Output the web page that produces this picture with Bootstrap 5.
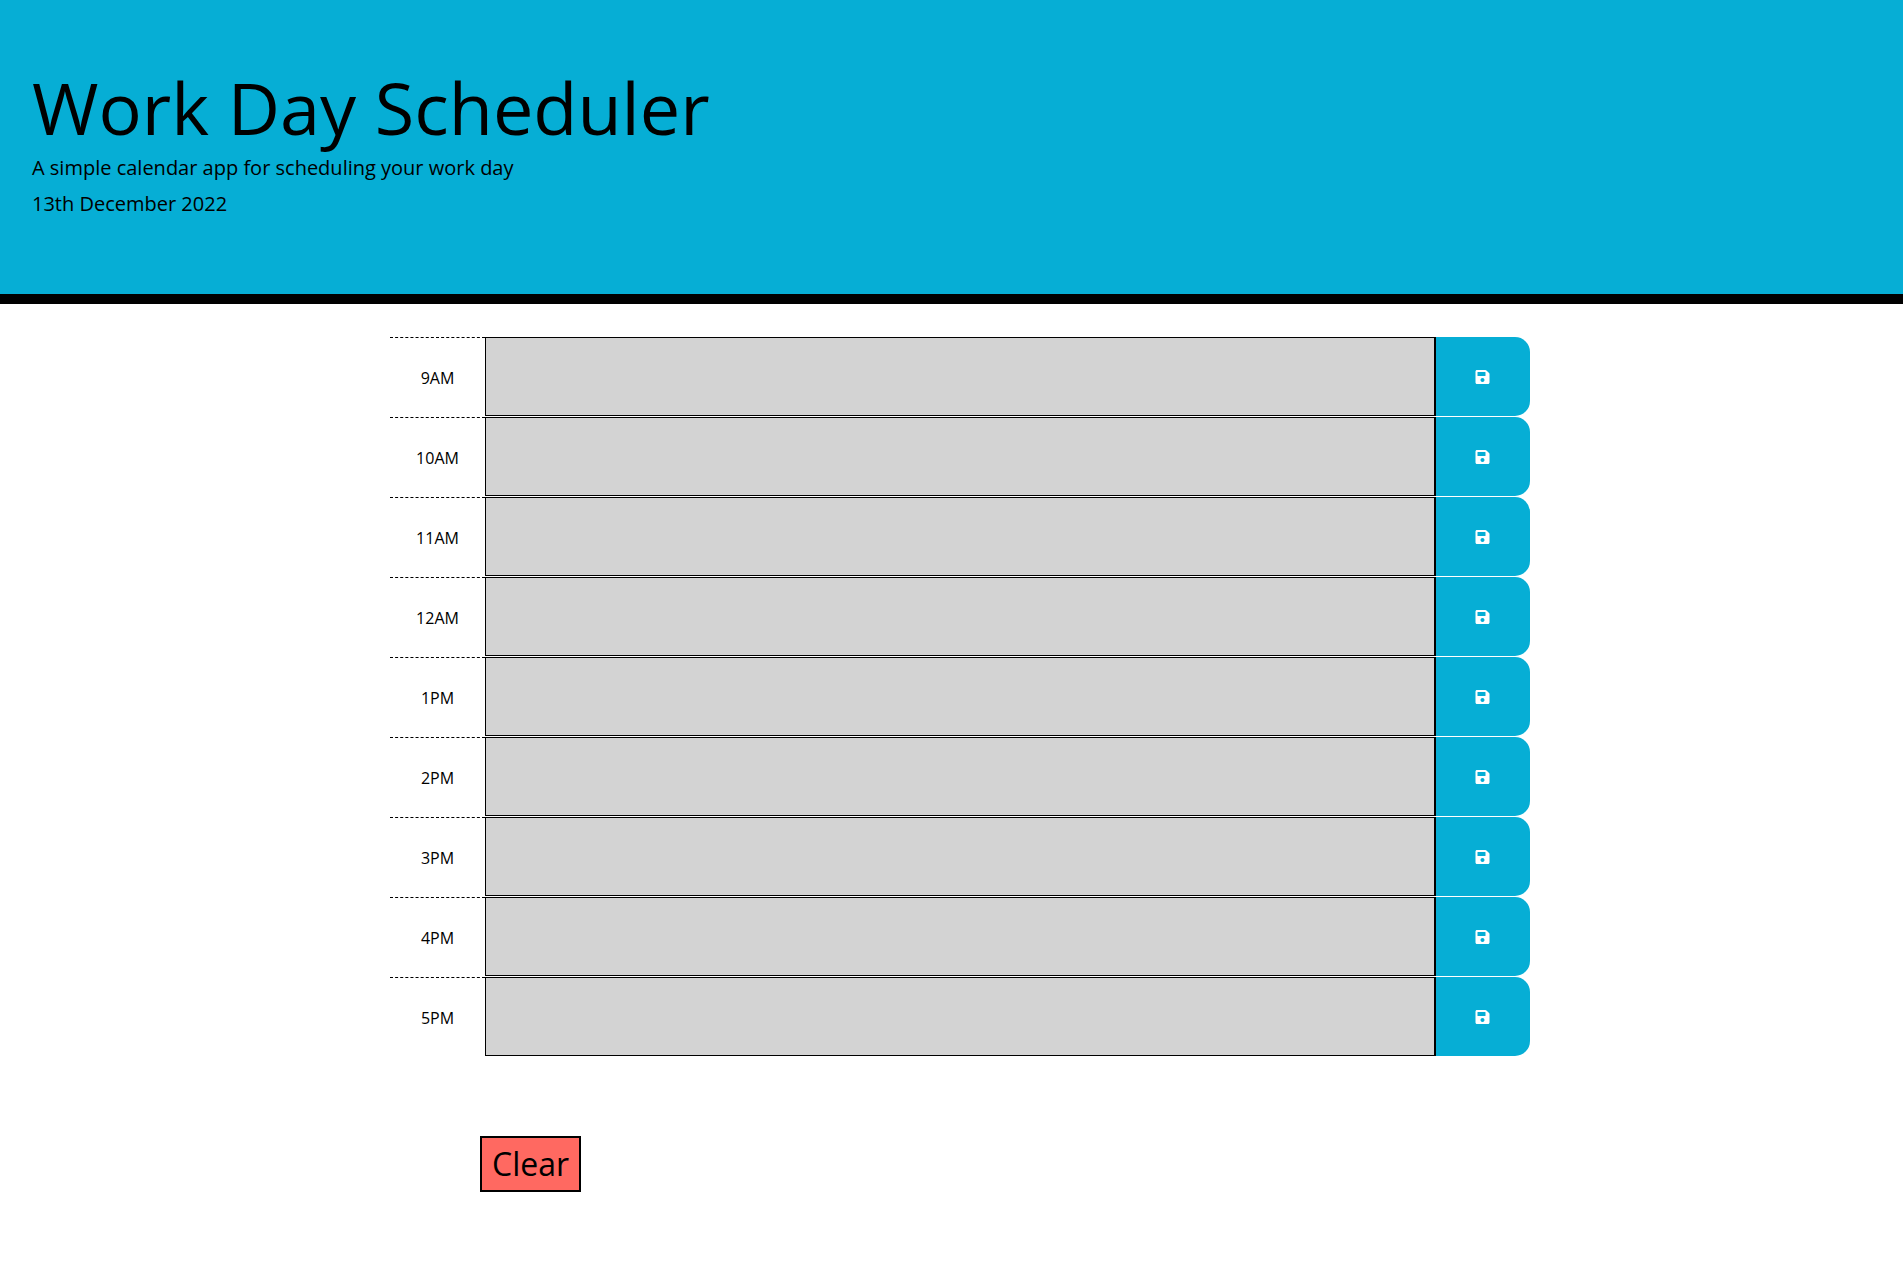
<!DOCTYPE html>
<html>
<head>
  <title>Work Day Scheduler</title>
  <meta charset="UTF-8" />
  <meta name="viewport" content="width=device-width, initial-scale=1" />
  <link href="https://cdn.jsdelivr.net/npm/bootstrap@5.3.0/dist/css/bootstrap.min.css" rel="stylesheet">
  <style>
    body { font-family: "Open Sans", sans-serif; color: #000; background: #fff; }
    .page-head { height: 304px; padding: 63px 32px 0; background: #06aed5; border-bottom: 10px solid #000; }
    .page-head h1 { font-size: 72px; line-height: 88px; font-weight: 400; margin: 0 0 2px; }
    .page-head p { font-size: 20px; line-height: 30px; margin: 0 0 6px; }
    .planner { width: 1140px; margin: 33px 0 0 390px; }
    .hour-row { height: 80px; }
    .hour-label { width: 95px; border-top: 1px dashed #000; font-size: 16px; padding-top: 28px; text-align: center; }
    .hour-text { flex: 1; height: 79px; background: #d3d3d3; border: 1px solid #000; border-radius: 0; padding: 8px; resize: none; }
    .save-btn { width: 95px; height: 79px; padding: 0 1px 0 0; background: #06aed5; border: 0; border-left: 1px solid #000; border-radius: 0 15px 15px 0; color: #fff; }
    .save-btn svg { display: block; margin: 0 auto; }
    .clear-btn { margin: 79px 0 0 480px; width: 101px; height: 56px; padding: 0; font-size: 32px; line-height: 1; background: #ff6961; border: 2px solid #000; border-radius: 0; color: #000; }
  </style>
</head>
<body>
  <header class="page-head">
    <h1>Work Day Scheduler</h1>
    <p>A simple calendar app for scheduling your work day</p>
    <p>13th December 2022</p>
  </header>

  <main class="planner" id="planner"></main>
  <button type="button" class="btn clear-btn d-block">Clear</button>

  <script>
    const hours = ["9AM", "10AM", "11AM", "12AM", "1PM", "2PM", "3PM", "4PM", "5PM"];
    const saveIcon = `<svg width="15" height="14" viewBox="0 32 448 448" fill="currentColor"><path d="M433.941 129.941l-83.882-83.882A48 48 0 0 0 316.118 32H48C21.49 32 0 53.49 0 80v352c0 26.51 21.49 48 48 48h352c26.51 0 48-21.49 48-48V163.882a48 48 0 0 0-14.059-33.941zM224 416c-35.346 0-64-28.654-64-64 0-35.346 28.654-64 64-64s64 28.654 64 64c0 35.346-28.654 64-64 64zm96-304.52V212c0 6.627-5.373 12-12 12H76c-6.627 0-12-5.373-12-12V108c0-6.627 5.373-12 12-12h228.52c3.183 0 6.235 1.264 8.485 3.515l3.48 3.48A11.996 11.996 0 0 1 320 111.48z"/></svg>`;

    document.getElementById("planner").innerHTML = hours.map(hour => `
      <div class="hour-row d-flex">
        <div class="hour-label">${hour}</div>
        <textarea class="hour-text" aria-label="${hour}"></textarea>
        <button type="button" class="save-btn" aria-label="Save ${hour}">${saveIcon}</button>
      </div>`).join("");
  </script>
  <script src="https://cdn.jsdelivr.net/npm/bootstrap@5.3.0/dist/js/bootstrap.bundle.min.js"></script>
</body>
</html>
